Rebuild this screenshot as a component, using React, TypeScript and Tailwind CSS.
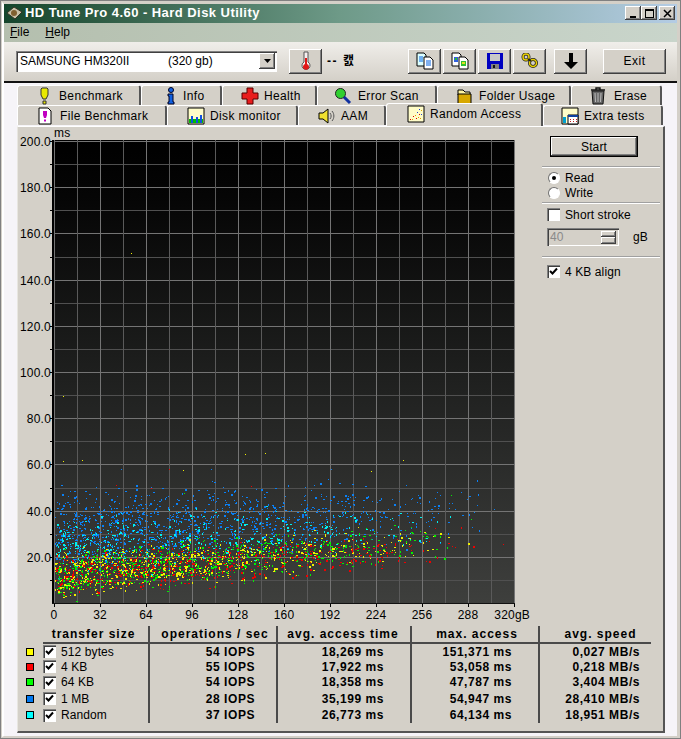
import { useMemo, type ReactNode } from "react";

const raised = "shadow-[inset_-1px_-1px_0_#404040,inset_1px_1px_0_#ffffff,inset_-2px_-2px_0_#808080]";
const sunken = "shadow-[inset_1px_1px_0_#808080,inset_2px_2px_0_#404040,inset_-1px_-1px_0_#ffffff]";

function rng(seed: number) {
  return () => {
    seed = (seed + 0x6d2b79f5) | 0;
    let t = Math.imul(seed ^ (seed >>> 15), 1 | seed);
    t = (t + Math.imul(t ^ (t >>> 7), 61 | t)) ^ t;
    return ((t ^ (t >>> 14)) >>> 0) / 4294967296;
  };
}

// scatter cloud for one series, page coordinates
function cloud(seed: number, count: number, mid: (p: number) => number, spread: number, span: number, extra: [number, number][] = []) {
  const r = rng(seed);
  let d = "";
  for (let i = 0; i < count; i++) {
    // density falls off steadily towards the end of the disk
    const p = Math.min(r(), r());
    const x = Math.round(54 + p * span);
    const tri = (r() + r() + r()) / 3 - 0.5;
    const ms = mid(p) + tri * 2 * spread * (1 - p * 0.25);
    const y = Math.round(604 - ms * 2.31);
    const w = r() > 0.6 ? 2 : 1;
    const h = r() > 0.7 ? 2 : 1;
    d += `M${x} ${y}h${w}v${h}h-${w}z`;
  }
  extra.forEach(([x, y]) => {
    d += `M${x} ${y}h1v1h-1z`;
  });
  return d;
}

function Chart() {
  const series = useMemo(
    () => [
      { color: "#0a80f5", d: cloud(11, 1150, (p) => 31 + p * 10, 24, 445, [[150, 488], [120, 470], [210, 470], [330, 470]]) },
      { color: "#00f0f0", d: cloud(23, 460, (p) => 24 + p * 11, 17, 430) },
      { color: "#00f000", d: cloud(37, 680, (p) => 12 + p * 17, 14, 420, [[183, 494], [450, 496], [470, 520]]) },
      { color: "#f0f000", d: cloud(41, 680, (p) => 12 + p * 16, 14, 420, [[62, 462], [81, 461], [130, 254], [244, 455], [264, 454], [62, 397], [182, 471], [402, 461], [370, 472]]) },
      { color: "#f00000", d: cloud(59, 520, (p) => 12 + p * 14, 13, 440, [[115, 486], [150, 489], [168, 470], [250, 487], [502, 545]]) },
    ],
    [],
  );
  const ylabels = ["200.0", "180.0", "160.0", "140.0", "120.0", "100.0", "80.0", "60.0", "40.0", "20.0"];
  const xlabels = ["0", "32", "64", "96", "128", "160", "192", "224", "256", "288", "320gB"];
  const yAt = (i: number) => 142 + i * 23.1;
  return (
    <svg viewBox="17 128 514 498" className="h-[498px] w-[514px] shrink-0" shapeRendering="crispEdges">
      <defs>
        <linearGradient id="plot" x1="0" y1="0" x2="0" y2="1">
          <stop offset="0" stopColor="#000000" />
          <stop offset="0.12" stopColor="#050505" />
          <stop offset="0.5" stopColor="#1e1f1e" />
          <stop offset="1" stopColor="#3e3f3d" />
        </linearGradient>
      </defs>
      <rect x="53" y="141" width="461" height="464" fill="url(#plot)" />
      {Array.from({ length: 20 }, (_, i) => (
        <g key={i}>
          <rect x="49" y={Math.round(yAt(i))} width={3} height="1" fill="#000" />
          <rect x="53" y={Math.round(yAt(i))} width="461" height="1" fill={i % 2 === 0 ? "#747474" : "#505050"} />
        </g>
      ))}
      {Array.from({ length: 21 }, (_, i) => (
        <g key={i}>
          <rect x={53 + i * 23} y="141" width="1" height="464" fill={i % 2 === 0 ? "#747474" : "#5a5a5a"} />
          {i % 2 === 0 && <rect x={53 + i * 23} y="605" width="1" height="3" fill="#000" />}
        </g>
      ))}
      {series.map((s) => (
        <path key={s.color} d={s.d} fill={s.color} />
      ))}
      <rect x="51" y="141" width="2" height="464" fill="#000" />
      <rect x="51" y="604" width="463" height="1" fill="#111" />
      <g fontSize="12" fontFamily="'Liberation Sans', sans-serif" fill="#000" shapeRendering="auto" letterSpacing="0.2">
        <text x="53" y="138">ms</text>
        {ylabels.map((t, i) => (
          <text key={t} x="50" y={yAt(i * 2) + 5} textAnchor="end">{t}</text>
        ))}
        {xlabels.map((t, i) => (
          <text key={t} x={i === 10 ? 529 : 53 + i * 46} y="620" textAnchor={i === 10 ? "end" : "middle"}>{t}</text>
        ))}
      </g>
    </svg>
  );
}

function Box({ children, checked, className = "" }: { children?: ReactNode; checked?: boolean; className?: string }) {
  return (
    <span className={`flex h-[13px] w-[13px] shrink-0 items-center justify-center bg-white ${sunken} ${className}`}>
      {checked && (
        <svg width="9" height="9" viewBox="0 0 9 9">
          <path d="M1 4l2.5 2.5L8 1.5" fill="none" stroke="#000" strokeWidth="2" />
        </svg>
      )}
      {children}
    </span>
  );
}

function Radio({ on }: { on?: boolean }) {
  return (
    <span className="flex h-3 w-3 items-center justify-center rounded-full border border-t-[#707070] border-l-[#707070] border-r-white border-b-white bg-white">
      {on && <span className="h-1 w-1 rounded-full bg-black" />}
    </span>
  );
}

const Ic = ({ children, w = 18, h = 18 }: { children: ReactNode; w?: number; h?: number }) => (
  <svg width={w} height={h} viewBox={`0 0 ${w} ${h}`} className="shrink-0">
    {children}
  </svg>
);

const icons = {
  bench: (
    <Ic>
      <path d="M6 1h5l1 1v6l-2 4H7L5 8V2z" fill="#e8e800" stroke="#333" />
      <path d="M7 14h3v3H7z" fill="#e8e800" stroke="#333" />
    </Ic>
  ),
  info: (
    <Ic>
      <circle cx="9" cy="3" r="2.5" fill="#1060e0" stroke="#002" />
      <path d="M6 7h5v8h1v2H6v-2h1V9H6z" fill="#1060e0" stroke="#002" />
    </Ic>
  ),
  health: (
    <Ic>
      <path d="M6 1h6v5h5v6h-5v5H6v-5H1V6h5z" fill="#e81c1c" stroke="#500" />
    </Ic>
  ),
  scan: (
    <Ic>
      <circle cx="6.5" cy="6.5" r="5" fill="#30d030" stroke="#222" />
      <path d="M10 10l6 6" stroke="#1030a0" strokeWidth="3" />
    </Ic>
  ),
  folder: (
    <Ic>
      <path d="M2 5V3h5l2 2h5v3H2z" fill="#fff4a0" stroke="#000" />
      <path d="M2 7h13v10H2z" fill="#d8a800" stroke="#000" />
    </Ic>
  ),
  erase: (
    <Ic>
      <path d="M2 3h14M7 3V1h4v2" stroke="#111" strokeWidth="1.4" fill="none" />
      <path d="M3 4h12l-1 13H4z" fill="#666" stroke="#111" />
      <path d="M6 6l.5 9M9 6v9M12 6l-.5 9" stroke="#bbb" />
    </Ic>
  ),
  file: (
    <Ic>
      <path d="M3 1h9l3 3v13H3z" fill="#fff" stroke="#000" />
      <path d="M7 4h4v4l-1 3H8L7 8z" fill="#c000c0" />
      <path d="M8 12.500h2v2H8z" fill="#c000c0" />
    </Ic>
  ),
  disk: (
    <Ic>
      <path d="M1 1h16v16H1z" fill="#fffcc8" stroke="#000" />
      <path d="M2 12h2v4H2z" fill="#00c000" />
      <path d="M4 9h2v7H4zM9 10h2v6H9zM13 8h2v8h-2z" fill="#1050e0" />
      <path d="M6 12h3v4H6zM11 12h2v4h-2zM15 12h1v4h-1z" fill="#00c000" />
    </Ic>
  ),
  aam: (
    <Ic>
      <path d="M1 6h4l5-4v14l-5-4H1z" fill="#f0e030" stroke="#000" />
      <path d="M12 6c1.500 2 1.500 4 0 6M14 4c2.500 3 2.500 7 0 10" fill="none" stroke="#555" />
    </Ic>
  ),
  random: (
    <Ic>
      <path d="M1 1h16v16H1z" fill="#fffcc8" stroke="#000" />
      <path d="M3 14h1v1H3zM6 11h1v1H6zM9 13h1v1H9zM12 9h1v1h-1z" fill="#e00000" />
      <path d="M5 14h1v1H5zM8 10h1v1H8zM11 12h1v1h-1zM14 5h1v1h-1zM13 13h1v1h-1z" fill="#e0a000" />
      <path d="M10 7h1v1h-1zM14 9h1v1h-1zM12 4h1v1h-1z" fill="#2040d0" />
    </Ic>
  ),
  extra: (
    <Ic>
      <path d="M1 1h16v16H1z" fill="#fffcc8" stroke="#000" />
      <path d="M2 10h3v6H2z" fill="#00a0d0" />
      <path d="M7 8h10v9H7z" fill="#fff" stroke="#000" />
      <path d="M7 8h10v2H7z" fill="#1040a0" />
      <path d="M9 12h1v1H9zM12 12h1v1h-1zM15 12h1v1h-1zM9 14h1v1H9zM12 14h1v1h-1zM15 14h1v1h-1z" fill="#c02020" />
    </Ic>
  ),
};

type TabDef = { label: string; w: number; pl: number; gap: number; icon: ReactNode; active?: boolean };

const row1: TabDef[] = [
  { label: "Benchmark", w: 124, pl: 18, gap: 5, icon: icons.bench },
  { label: "Info", w: 81, pl: 20, gap: 3, icon: icons.info },
  { label: "Health", w: 95, pl: 18, gap: 5, icon: icons.health },
  { label: "Error Scan", w: 120, pl: 16, gap: 6, icon: icons.scan },
  { label: "Folder Usage", w: 134, pl: 18, gap: 5, icon: icons.folder },
  { label: "Erase", w: 91, pl: 17, gap: 7, icon: icons.erase },
];

const row2: TabDef[] = [
  { label: "File Benchmark", w: 150, pl: 18, gap: 6, icon: icons.file },
  { label: "Disk monitor", w: 131, pl: 19, gap: 5, icon: icons.disk },
  { label: "AAM", w: 88, pl: 19, gap: 5, icon: icons.aam },
  { label: "Random Access", w: 157, pl: 20, gap: 5, icon: icons.random, active: true },
  { label: "Extra tests", w: 120, pl: 17, gap: 5, icon: icons.extra },
];

function Tab({ tab }: { tab: TabDef }) {
  return (
    <div
      style={{ width: tab.w, paddingLeft: tab.pl, columnGap: tab.gap }}
      className={`flex shrink-0 items-center rounded-t-[3px] border-t border-l border-r-2 border-t-white border-l-white border-r-[#555555] bg-[#d4d0c8] tracking-[0.35px] ${
        tab.active ? "relative z-10 -mt-[2px] h-[23px] pb-[3px]" : "h-[20px]"
      }`}
    >
      {tab.icon}
      <span>{tab.label}</span>
    </div>
  );
}

function ToolButton({ children, className = "w-[33px]" }: { children: ReactNode; className?: string }) {
  return <div className={`flex h-[25px] shrink-0 items-center justify-center bg-[#d4d0c8] ${raised} ${className}`}>{children}</div>;
}

const Separator = ({ className = "" }: { className?: string }) => <div className={`h-[2px] w-[118px] border-t border-b border-t-[#a0a0a0] border-b-white ${className}`} />;

const results = [
  { name: "512 bytes", color: "bg-[#ffff00]", ops: "54 IOPS", avg: "18,269 ms", max: "151,371 ms", speed: "0,027 MB/s", h: "h-[15px]" },
  { name: "4 KB", color: "bg-[#ff0000]", ops: "55 IOPS", avg: "17,922 ms", max: "53,058 ms", speed: "0,218 MB/s", h: "h-[15px]" },
  { name: "64 KB", color: "bg-[#00ff00]", ops: "54 IOPS", avg: "18,358 ms", max: "47,787 ms", speed: "3,404 MB/s", h: "h-[16px]" },
  { name: "1 MB", color: "bg-[#0078f0]", ops: "28 IOPS", avg: "35,199 ms", max: "54,947 ms", speed: "28,410 MB/s", h: "h-[17px]" },
  { name: "Random", color: "bg-[#00ffff]", ops: "37 IOPS", avg: "26,773 ms", max: "64,134 ms", speed: "18,951 MB/s", h: "h-[16px]" },
];

const divider = "border-r-2 border-[#4a4a4a]";
const head = "flex h-[18px] items-center justify-center border-b-2 font-bold tracking-[1px]";

function Results() {
  return (
    <div className="ml-[-1px] grid grid-cols-[26px_107px_128px_134px_128px_111px]">
      <div />
      <div className={`${head} pr-[4px] ${divider}`}>transfer size</div>
      <div className={`${head} pl-[4px] ${divider}`}>operations / sec</div>
      <div className={`${head} pr-[2px] ${divider}`}>avg. access time</div>
      <div className={`${head} pl-[4px] tracking-[1.3px] ${divider}`}>max. access</div>
      <div className={`${head} pl-[10px] border-[#4a4a4a]`}>avg. speed</div>
      {results.map((r) => (
        <div key={r.name} className="contents">
          <div className={`flex items-center pl-[9px] ${r.h}`}>
            <span className={`h-2 w-2 border border-black ${r.color}`} />
          </div>
          <div className={`flex items-center gap-[5px] tracking-[0.1px] ${r.h} ${divider}`}>
            <Box checked />
            <span>{r.name}</span>
          </div>
          <div className={`flex items-center justify-end pr-[21px] font-bold ${r.h} ${divider}`}>{r.ops}</div>
          <div className={`flex items-center justify-end pr-[26px] font-bold ${r.h} ${divider}`}>{r.avg}</div>
          <div className={`flex items-center justify-end pr-[26px] font-bold ${r.h} ${divider}`}>{r.max}</div>
          <div className={`flex items-center justify-end pr-[11px] font-bold ${r.h}`}>{r.speed}</div>
        </div>
      ))}
    </div>
  );
}

function Sidebar() {
  return (
    <aside className="flex flex-col pl-[18px] pt-[9px] tracking-[0.1px]">
      <div className="flex h-[21px] w-[88px] items-center justify-center border border-black bg-[#d4d0c8] shadow-[inset_-1px_-1px_0_#404040,inset_1px_1px_0_#ffffff,inset_-2px_-2px_0_#808080]">Start</div>
      <Separator className="mt-[9px] ml-[-8px]" />
      <div className="mt-[2px] ml-[-2px] flex h-[15px] items-center gap-[5px]"><Radio on />Read</div>
      <div className="ml-[-2px] flex h-[15px] items-center gap-[5px]"><Radio />Write</div>
      <Separator className="mt-[2px] ml-[-8px]" />
      <div className="mt-[3px] ml-[-3px] flex h-[15px] items-center gap-[5px]"><Box />Short stroke</div>
      <div className="mt-[6px] ml-[-3px] flex items-center">
        <div className={`flex h-[18px] w-[72px] items-center justify-between bg-[#d4d0c8] pl-[3px] pr-[3px] text-[#8a8a8a] ${sunken}`}>
          40
          <span className="flex h-[13px] w-[15px] flex-col">
            <span className={`flex-1 ${raised}`} />
            <span className={`flex-1 ${raised}`} />
          </span>
        </div>
        <span className="ml-[14px]">gB</span>
      </div>
      <Separator className="mt-[10px] ml-[-8px]" />
      <div className="mt-[6px] ml-[-3px] flex h-[15px] items-center gap-[5px]"><Box checked />4 KB align</div>
    </aside>
  );
}

export default function App() {
  return (
    <div className="h-[739px] w-[681px] overflow-hidden border border-[#808080] bg-[#d4d0c8] p-[1px] text-[12px] tracking-[0.55px] text-black [font-family:'Liberation_Sans','Noto_Sans_CJK_KR',sans-serif]">
      <div className="flex h-full flex-col border-2 border-b-[1px] border-[#d4d0c8] border-l-white bg-[#f6f4f8]">
        <div className="flex h-[19px] shrink-0 items-center justify-between bg-gradient-to-r from-[#14452c] via-[#6e9a88] to-[#b4cce4] px-[2px] pb-[1px] text-white">
          <div className="flex items-center gap-[2px]">
            <svg width="17" height="14" viewBox="0 0 17 14">
              <path d="M1 7l7-6 8 5-7 7z" fill="#c8c0a8" stroke="#332" />
              <circle cx="8" cy="7" r="3" fill="#806030" />
            </svg>
            <span className="text-[13px] font-bold tracking-[0.45px]">HD Tune Pro 4.60 - Hard Disk Utility</span>
          </div>
          <div className="flex items-center">
            {[
              <path key="m" d="M3 9h6v2H3z" />,
              <path key="r" d="M2 2h9v9H2V2zm1 2v6h7V4z" fillRule="evenodd" />,
              <path key="c" d="M3 3l7 7M10 3l-7 7" stroke="#000" strokeWidth="1.5" />,
            ].map((g, i) => (
              <div key={i} className={`flex h-[14px] w-[16px] items-center justify-center bg-[#d4d0c8] ${raised} ${i === 2 ? "ml-[2px]" : ""}`}>
                <svg width="13" height="13" viewBox="0 0 13 13">{g}</svg>
              </div>
            ))}
          </div>
        </div>

        <div className="flex h-[19px] shrink-0 items-center gap-[16px] bg-gradient-to-r from-[#b4bfae] to-[#c9d5cb] pb-[2px] pl-[6px] tracking-normal">
          <span><span className="underline">F</span>ile</span>
          <span><span className="underline">H</span>elp</span>
        </div>

        <div className="flex h-[41px] shrink-0 items-center border-b-2 border-[#111111] bg-gradient-to-b from-[#f0eeea] to-[#d4d0c8] pb-[1px] pl-[12px]">
          <div className={`flex h-[21px] w-[261px] items-center justify-between bg-white pl-[4px] pr-[2px] tracking-normal ${sunken}`}>
            <span className="flex">
              <span className="w-[148px]">SAMSUNG HM320II</span>
              <span>(320 gb)</span>
            </span>
            <span className={`flex h-[16px] w-[16px] items-center justify-center bg-[#d4d0c8] ${raised}`}>
              <svg width="7" height="4" viewBox="0 0 7 4"><path d="M0 0h7L3.500 4z" /></svg>
            </span>
          </div>
          <ToolButton className="ml-[12px] w-[33px]">
            <svg width="12" height="20" viewBox="0 0 12 20">
              <path d="M4 1h4v10a4 4 0 1 1-4 0z" fill="#f8f0f0" stroke="#555" />
              <path d="M5 7h2v6a3 3 0 1 1-2 0z" fill="#e01818" />
            </svg>
          </ToolButton>
          <span className="ml-[5px] flex w-[81px] items-center gap-[5px] whitespace-nowrap font-bold tracking-[1.5px]">-- <span className="text-[12px] tracking-normal">캜</span></span>
          <ToolButton>
            <svg width="18" height="18" viewBox="0 0 18 18">
              <path d="M1 1h7l2 2v11H1z" fill="#dff" stroke="#000" />
              <path d="M8 5h6l3 3v9H8z" fill="#fff" stroke="#000" />
              <path d="M10 9h5M10 11h5M10 13h5" stroke="#0060e0" />
              <path d="M3 5h4M3 7h4M3 9h4" stroke="#0060e0" />
            </svg>
          </ToolButton>
          <ToolButton className="ml-[2px] w-[33px]">
            <svg width="18" height="18" viewBox="0 0 18 18">
              <path d="M1 1h7l2 2v11H1z" fill="#fff" stroke="#000" />
              <path d="M8 5h6l3 3v9H8z" fill="#fff" stroke="#000" />
              <path d="M3 5h4v5H3z" fill="#3060e0" />
              <path d="M4 6h2v2H4z" fill="#30c030" />
              <path d="M10 9h5v5h-5z" fill="#30c030" />
              <path d="M11 10h3v2h-3z" fill="#e0e020" />
            </svg>
          </ToolButton>
          <ToolButton className="ml-[2px] w-[33px]">
            <svg width="16" height="16" viewBox="0 0 16 16">
              <path d="M0 0h16v16H0z" fill="#0000c0" />
              <path d="M3 1h10v7H3z" fill="#c8c8c8" />
              <path d="M4 11h8v5H4z" fill="#808080" />
              <path d="M6 12h2v3H6z" fill="#111" />
            </svg>
          </ToolButton>
          <ToolButton className="ml-[2px] w-[33px]">
            <svg width="18" height="16" viewBox="0 0 18 16">
              <circle cx="5" cy="4" r="3" fill="none" stroke="#222" strokeWidth="3" />
              <circle cx="5" cy="4" r="3" fill="none" stroke="#e8d000" strokeWidth="1.5" />
              <circle cx="12" cy="10" r="3.500" fill="none" stroke="#222" strokeWidth="3" />
              <circle cx="12" cy="10" r="3.500" fill="none" stroke="#e8d000" strokeWidth="1.5" />
              <path d="M7 6l3 2" stroke="#222" strokeWidth="2" />
            </svg>
          </ToolButton>
          <ToolButton className="ml-[8px] w-[33px]">
            <svg width="14" height="16" viewBox="0 0 14 16"><path d="M5 0h4v9h5l-7 7-7-7h5z" /></svg>
          </ToolButton>
          <ToolButton className="ml-[16px] w-[63px]">Exit</ToolButton>
        </div>

        <div className="flex flex-1 flex-col pl-[13px] pr-[12px] pt-[2px]">
          <div className="flex">
            {row1.map((t) => <Tab key={t.label} tab={t} />)}
          </div>
          <div className="flex">
            {row2.map((t) => <Tab key={t.label} tab={t} />)}
          </div>
          <div className="mb-[3px] flex flex-1 flex-col border-t border-l border-b-2 border-r-2 border-t-white border-l-[#e8e6e0] border-r-[#555555] border-b-[#555555] bg-[#d4d0c8]">
            <div className="flex h-[499px]">
              <Chart />
              <Sidebar />
            </div>
            <Results />
          </div>
        </div>
      </div>
    </div>
  );
}
